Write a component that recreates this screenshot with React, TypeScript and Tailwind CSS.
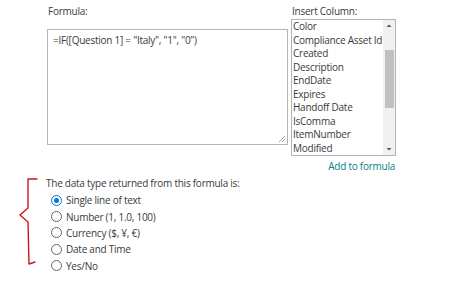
import React from "react";

const columns = [
  "Color",
  "Compliance Asset Id",
  "Created",
  "Description",
  "EndDate",
  "Expires",
  "Handoff Date",
  "IsComma",
  "ItemNumber",
  "Modified",
];

const types = [
  "Single line of text",
  "Number (1, 1.0, 100)",
  "Currency ($, ¥, €)",
  "Date and Time",
  "Yes/No",
];

export default function App() {
  return (
    <div
      className="w-[474px] h-[281px] bg-white text-[#3a3a3a] overflow-hidden tracking-[-0.25px]"
      style={{ fontFamily: '"Open Sans", "Noto Sans", sans-serif' }}
    >
      <div className="flex pt-[3px]">
        <div className="ml-[47px] flex flex-col">
          <div className="text-[10px] leading-[16px] h-[26px] pl-[1px]">Formula:</div>
          <div className="relative w-[241px] h-[116px] border border-[#b4b4b4] px-[5px] pt-[3px] text-[10px] leading-[14px]">
            =IF([Question 1] = "Italy", "1", "0")
            <svg className="absolute right-[1px] bottom-[1px]" width="8" height="8" viewBox="0 0 8 8">
              <line x1="1" y1="7" x2="7" y2="1" stroke="#888" strokeWidth="0.8" />
              <line x1="4" y1="7" x2="7" y2="4" stroke="#888" strokeWidth="0.8" />
            </svg>
          </div>
        </div>
        <div className="ml-[3px] flex flex-col">
          <div className="text-[10px] leading-[16px] h-[16px] pl-[1px]">Insert Column:</div>
          <div className="flex w-[105px] h-[137px] border border-[#b4b4b4] bg-white">
            <div className="flex-1 flex flex-col pl-[1px] overflow-hidden">
              {columns.map((c) => (
                <div key={c} className="text-[10px] leading-[13.5px] whitespace-nowrap">
                  {c}
                </div>
              ))}
            </div>
            <div className="w-[12px] bg-[#f0f0f0] flex flex-col items-center">
              <svg width="12" height="12" viewBox="0 0 12 12">
                <path d="M3.5 7 L6 4.5 L8.5 7 Z" fill="#555" />
              </svg>
              <div className="mt-[18px] w-[9px] h-[58px] bg-[#c1c1c1]" />
              <div className="flex-1" />
              <svg width="12" height="12" viewBox="0 0 12 12">
                <path d="M3.5 5 L6 7.5 L8.5 5 Z" fill="#555" />
              </svg>
            </div>
          </div>
          <div className="mt-[2px] pr-[1px] text-right text-[10px] leading-[16px] text-[#038387]">
            Add to formula
          </div>
        </div>
      </div>

      <div className="flex mt-[1px]">
        <svg className="ml-[18px] mt-[1px]" width="22" height="92" viewBox="0 0 22 92">
          <path
            d="M19 3 L10 3 L10 32 L2 39 L10 46 L11 88 L17 86"
            fill="none"
            stroke="#d0141b"
            strokeWidth="1.4"
            strokeLinejoin="round"
            strokeLinecap="round"
          />
        </svg>
        <div className="ml-[6px] flex flex-col">
          <div className="text-[10px] leading-[16px] h-[17px]">
            The data type returned from this formula is:
          </div>
          {types.map((t) => (
            <label key={t} className="flex items-center h-[16.4px] pl-[5px]">
              {t === types[0] ? (
                <span className="w-[11px] h-[11px] rounded-full border border-[#0078d4] flex items-center justify-center">
                  <span className="w-[5px] h-[5px] rounded-full bg-[#0078d4]" />
                </span>
              ) : (
                <span className="w-[11px] h-[11px] rounded-full border border-[#666]" />
              )}
              <span className="ml-[4px] text-[10px] leading-[16px]">{t}</span>
            </label>
          ))}
        </div>
      </div>
    </div>
  );
}
